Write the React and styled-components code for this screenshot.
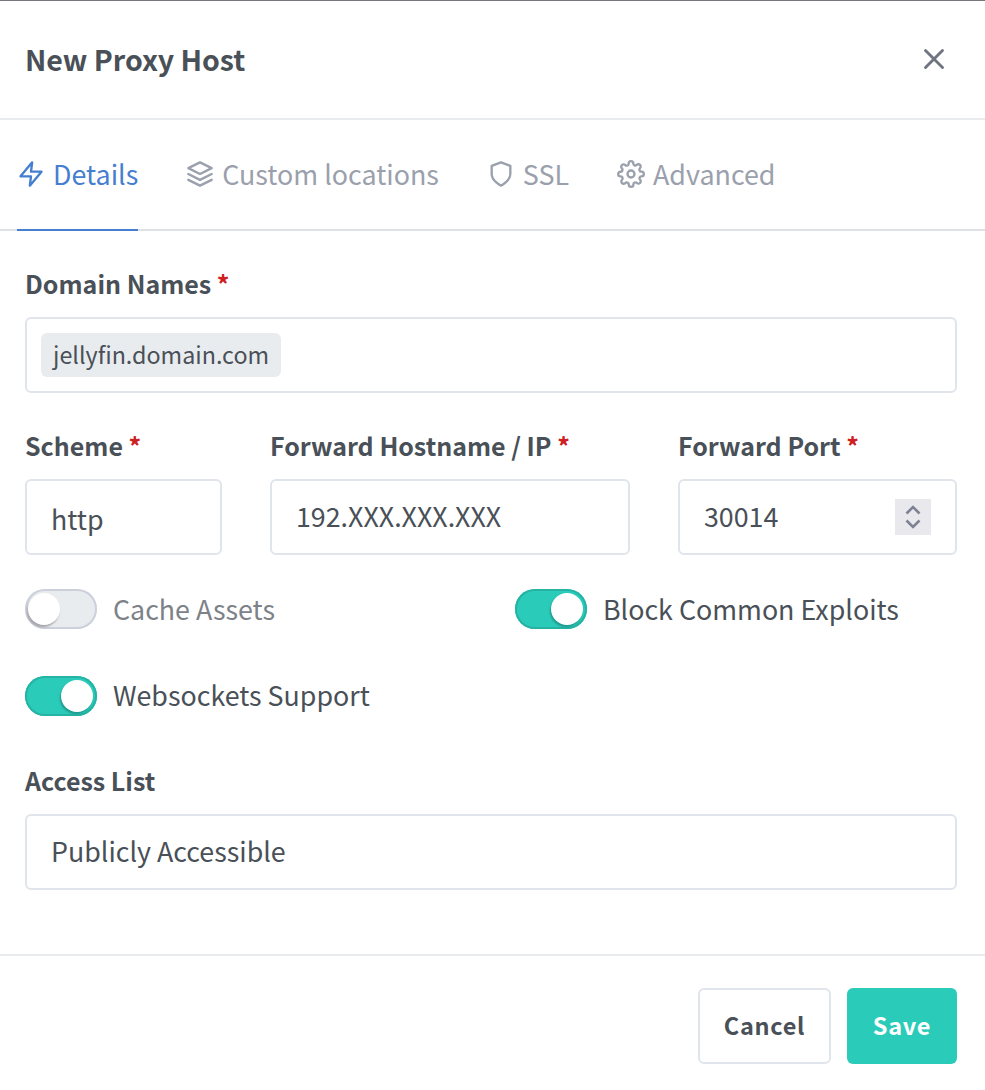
import React from "react"
import styled, { createGlobalStyle } from "styled-components"
import { FiLayers, FiSettings, FiShield, FiX, FiZap } from "react-icons/fi"

const GlobalStyle = createGlobalStyle`
  html, body {
    margin: 0;
    padding: 0;
    background: #fff;
  }
  body {
    font-family: "Noto Sans CJK SC", "Noto Sans", sans-serif;
    color: #495057;
  }
`

const tabs = [
  { label: "Details", Icon: FiZap, active: true },
  { label: "Custom locations", Icon: FiLayers },
  { label: "SSL", Icon: FiShield },
  { label: "Advanced", Icon: FiSettings },
]

function Toggle({ on, label, lift }) {
  return (
    <ToggleRow>
      <Track $on={on}>
        <Knob $on={on} />
      </Track>
      <ToggleLabel $on={on} $lift={lift}>
        {label}
      </ToggleLabel>
    </ToggleRow>
  )
}

function Required() {
  return <Star>*</Star>
}

export default function App() {
  return (
    <Modal>
      <GlobalStyle />
      <Header>
        <Title>New Proxy Host</Title>
        <CloseButton>
          <FiX size={34} />
        </CloseButton>
      </Header>
      <Tabs>
        {tabs.map(({ label, Icon, active }) => (
          <Tab key={label} $active={active}>
            <Icon size={28} />
            {label}
          </Tab>
        ))}
      </Tabs>
      <Body>
        <Label>
          Domain Names <Required />
        </Label>
        <Field>
          <Tag>jellyfin.domain.com</Tag>
        </Field>
        <ForwardGrid>
          <div>
            <Label>
              Scheme <Required />
            </Label>
            <Field>
              <SelectText>http</SelectText>
            </Field>
          </div>
          <div>
            <Label>
              Forward Hostname / IP <Required />
            </Label>
            <Field>
              <FieldText>192.XXX.XXX.XXX</FieldText>
            </Field>
          </div>
          <div>
            <Label>
              Forward Port <Required />
            </Label>
            <PortField>
              <FieldText>30014</FieldText>
              <Stepper>
                <svg width="16" height="28" viewBox="0 0 16 28" fill="none" stroke="#7e8194" strokeWidth="2.6">
                  <path d="M1.5 10.5L8 4l6.5 6.5" />
                  <path d="M1.5 17.5L8 24l6.5-6.5" />
                </svg>
              </Stepper>
            </PortField>
          </div>
        </ForwardGrid>
        <ToggleGrid>
          <Toggle label="Cache Assets" />
          <Toggle on label="Block Common Exploits" />
          <Toggle on lift label="Websockets Support" />
        </ToggleGrid>
        <Label>Access List</Label>
        <Field>
          <FieldText>Publicly Accessible</FieldText>
        </Field>
      </Body>
      <Footer>
        <CancelButton>Cancel</CancelButton>
        <SaveButton>Save</SaveButton>
      </Footer>
    </Modal>
  )
}

const Modal = styled.div`
  width: 985px;
  height: 1090px;
  box-sizing: border-box;
  border-top: 1px solid #76777c;
  background: #fff;
  overflow: hidden;
`
const Header = styled.div`
  height: 119px;
  box-sizing: border-box;
  padding: 0 25px 2px;
  border-bottom: 2px solid #e9ecef;
  display: flex;
  align-items: center;
  justify-content: space-between;
`
const Title = styled.h1`
  margin: 0;
  font-size: 28.5px;
  line-height: 36px;
  font-weight: 700;
  color: #495057;
`
const CloseButton = styled.div`
  display: flex;
  margin-right: 9px;
  color: #6e7480;
`
const Tabs = styled.div`
  height: 111px;
  box-sizing: border-box;
  padding: 0 17px;
  border-bottom: 2px solid #dee2e6;
  display: flex;
  gap: 48px;
`
const Tab = styled.div`
  height: 111px;
  box-sizing: border-box;
  padding-bottom: 2px;
  display: flex;
  align-items: center;
  gap: 8px;
  font-size: 26.85px;
  line-height: 36px;
  color: ${({ $active }) => ($active ? "#467fcf" : "#9aa0ac")};
  border-bottom: 2px solid ${({ $active }) => ($active ? "#467fcf" : "transparent")};
`
const Body = styled.div`
  padding: 34px 28px 0 25px;
  height: 723px;
  box-sizing: border-box;
`
const Label = styled.div`
  margin-bottom: 16px;
  font-size: 25px;
  line-height: 36px;
  font-weight: 700;
  color: #495057;
`
const Star = styled.span`
  color: #cd201f;
`
const Field = styled.div`
  height: 76px;
  box-sizing: border-box;
  padding: 0 24px;
  border: 2px solid #e0e5ec;
  border-radius: 6px;
  display: flex;
  align-items: center;
  font-size: 26.8px;
  color: #495057;
`
const FieldText = styled.span`
  padding-bottom: 4px;
`
const SelectText = styled.span`
  padding-top: 2px;
`
const Tag = styled.span`
  margin-left: -10px;
  padding: 0 12px 2px;
  height: 44px;
  box-sizing: border-box;
  display: inline-flex;
  align-items: center;
  background: #e9ecef;
  border-radius: 6px;
  font-size: 23.3px;
`
const ForwardGrid = styled.div`
  margin-top: 34px;
  display: grid;
  grid-template-columns: 197px 360px 1fr;
  gap: 48px;
`
const PortField = styled(Field)`
  justify-content: space-between;
`
const Stepper = styled.div`
  width: 36px;
  height: 36px;
  background: #e9e9ed;
  display: flex;
  align-items: center;
  justify-content: center;
`
const ToggleGrid = styled.div`
  margin-top: 34px;
  margin-bottom: 46px;
  display: grid;
  grid-template-columns: 442px 1fr;
  column-gap: 48px;
  row-gap: 47px;
`
const ToggleRow = styled.div`
  display: flex;
  align-items: center;
  gap: 16px;
  height: 40px;
`
const Track = styled.div`
  position: relative;
  width: 72px;
  height: 40px;
  box-sizing: border-box;
  flex: none;
  border-radius: 20px;
  background: ${({ $on }) => ($on ? "#2bcbba" : "#e9ecef")};
  box-shadow: inset 0 0 0 2px ${({ $on }) => ($on ? "#26b3a4" : "#ccd0da")};
`
const Knob = styled.div`
  position: absolute;
  top: 4px;
  left: ${({ $on }) => ($on ? "36px" : "3px")};
  width: 32px;
  height: 32px;
  border-radius: 50%;
  background: #fff;
  box-shadow: ${({ $on }) =>
    $on ? "-1px 2px 2px rgba(20, 120, 110, 0.6)" : "-1px 2px 2px rgba(100, 90, 100, 0.5)"};
`
const ToggleLabel = styled.span`
  padding-bottom: ${({ $lift }) => ($lift ? "2px" : "0")};
  font-size: 26.8px;
  line-height: 36px;
  color: ${({ $on }) => ($on ? "#495057" : "#7d8289")};
`
const Footer = styled.div`
  border-top: 2px solid #e9ecef;
  padding: 32px 28px 0 0;
  display: flex;
  justify-content: flex-end;
  gap: 16px;
`
const CancelButton = styled.div`
  width: 133px;
  height: 76px;
  box-sizing: border-box;
  padding-bottom: 2px;
  border: 2px solid #e0e5ec;
  border-radius: 6px;
  display: flex;
  align-items: center;
  justify-content: center;
  font-size: 23.5px;
  font-weight: 700;
  letter-spacing: 0.7px;
  color: #495057;
`
const SaveButton = styled(CancelButton)`
  width: 110px;
  border: none;
  background: #2bcbba;
  color: #fff;
`
